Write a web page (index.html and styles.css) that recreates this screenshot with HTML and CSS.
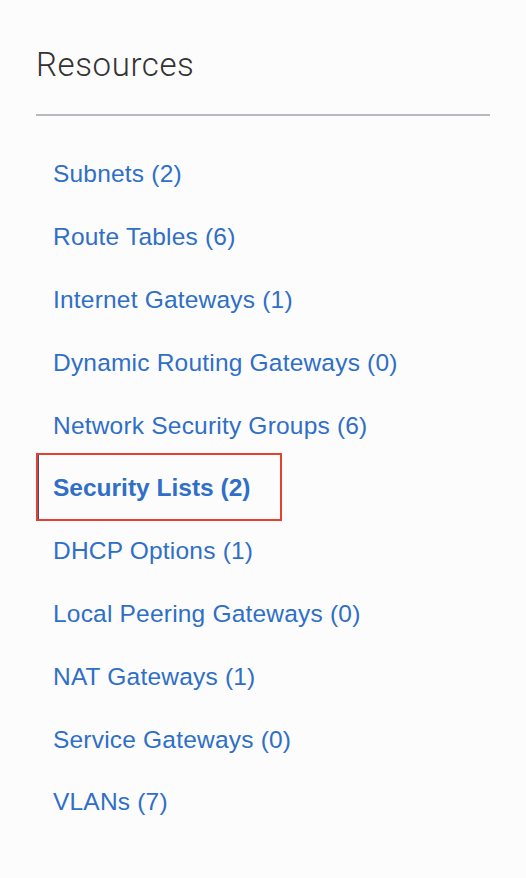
FILE: index.html
```html
<!DOCTYPE html>
<html lang="en">
<head>
<meta charset="utf-8">
<title>Resources</title>
<link rel="stylesheet" href="styles.css">
</head>
<body>
<nav class="panel">
  <h2 class="panel-title">Resources</h2>
  <div class="divider"></div>
  <ul class="res-list">
    <li class="res-item"><a class="res-link" href="#">Subnets (2)</a></li>
    <li class="res-item"><a class="res-link" href="#">Route Tables (6)</a></li>
    <li class="res-item"><a class="res-link" href="#">Internet Gateways (1)</a></li>
    <li class="res-item"><a class="res-link" href="#">Dynamic Routing Gateways (0)</a></li>
    <li class="res-item"><a class="res-link" href="#">Network Security Groups (6)</a></li>
    <li class="res-item is-active"><a class="res-link" href="#">Security Lists (2)</a></li>
    <li class="res-item"><a class="res-link" href="#">DHCP Options (1)</a></li>
    <li class="res-item"><a class="res-link" href="#">Local Peering Gateways (0)</a></li>
    <li class="res-item"><a class="res-link" href="#">NAT Gateways (1)</a></li>
    <li class="res-item"><a class="res-link" href="#">Service Gateways (0)</a></li>
    <li class="res-item"><a class="res-link" href="#">VLANs (7)</a></li>
  </ul>
</nav>
</body>
</html>
```
FILE: styles.css
```css
html, body {
  margin: 0;
  padding: 0;
  background: #fcfcfc;
}

.panel {
  width: 454px;
  padding: 45px 36px 0 36px;
}

.panel-title {
  margin: 0;
  font-family: Roboto, "Liberation Sans", sans-serif;
  font-weight: 300;
  font-size: 33px;
  line-height: 40px;
  letter-spacing: 0.6px;
  color: #333333;
}

.divider {
  margin-top: 29px;
  height: 2px;
  background: #b7b9be;
}

.res-list {
  list-style: none;
  margin: 27px 0 0 0;
  padding: 0;
}

.res-item {
  position: relative;
  height: 62.8px;
  display: flex;
  align-items: center;
}

.res-link {
  padding-left: 17px;
  font-family: "Liberation Sans", Arial, sans-serif;
  font-size: 24.5px;
  line-height: 28px;
  letter-spacing: 0.2px;
  color: #2f6fc7;
  text-decoration: none;
}

.is-active .res-link {
  font-weight: bold;
  letter-spacing: 0;
}

.is-active::after {
  content: "";
  position: absolute;
  left: 0;
  top: -4px;
  width: 242px;
  height: 64px;
  border: 2px solid #e4422f;
  box-shadow: inset 1px 0 0 #3d4a92;
}
```
